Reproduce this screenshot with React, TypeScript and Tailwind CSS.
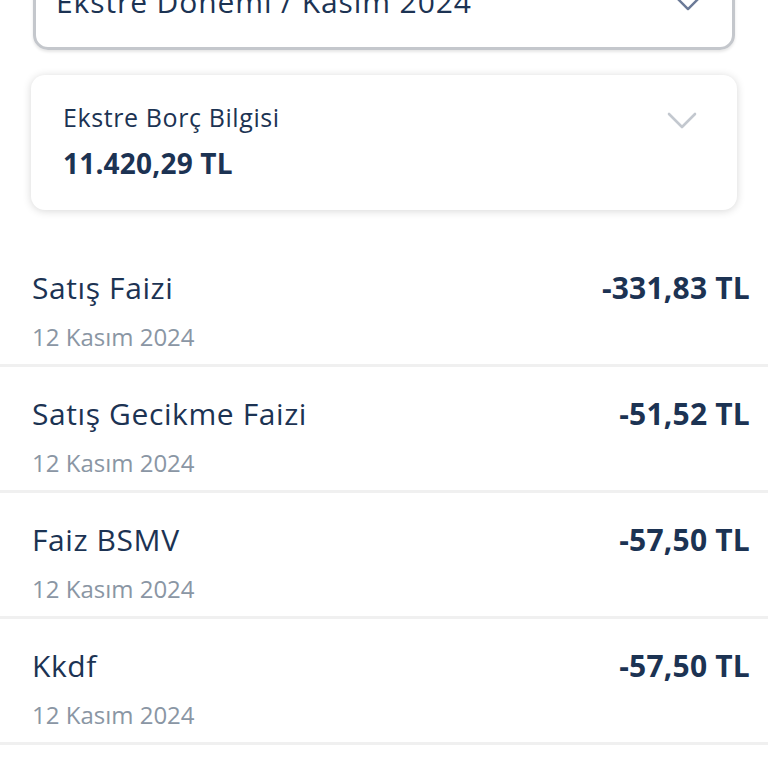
const rows = [
  { title: "Satış Faizi", date: "12 Kasım 2024", amount: "-331,83 TL" },
  { title: "Satış Gecikme Faizi", date: "12 Kasım 2024", amount: "-51,52 TL" },
  { title: "Faiz BSMV", date: "12 Kasım 2024", amount: "-57,50 TL" },
  { title: "Kkdf", date: "12 Kasım 2024", amount: "-57,50 TL" },
];

function Chevron({ className, width = 30 }: { className?: string; width?: number }) {
  return (
    <svg
      className={className}
      width={width}
      height={width / 2 + 2}
      viewBox="0 0 30 17"
      fill="none"
      stroke="currentColor"
      strokeWidth="2.6"
      strokeLinecap="round"
      strokeLinejoin="round"
    >
      <path d="M2 2L15 15L28 2" />
    </svg>
  );
}

export default function App() {
  return (
    <div
      className="w-full h-[768px] overflow-hidden bg-white text-[#1c3353]"
      style={{ fontFamily: "'Open Sans', 'Noto Sans', sans-serif" }}
    >
      {/* Period selector (cut off at top) */}
      <div className="mx-[33px] mt-[-52px] h-[102px] rounded-[15px] border-[3px] border-[#c4c7cc] shadow-[0_2px_3px_rgba(0,0,0,0.1)] flex items-center justify-between pl-[20px] pr-[30px]">
        <span className="text-[30px] leading-none tracking-[0.9px] font-medium mt-[6px]">Ekstre Dönemi / Kasım 2024</span>
        <Chevron className="text-[#6b7a97] mt-[8px]" width={28} />
      </div>

      {/* Statement debt card */}
      <div className="mx-[31px] mt-[25px] h-[135px] rounded-[14px] bg-white shadow-[0_1px_8px_rgba(0,0,0,0.16)] flex items-start justify-between pl-[32px] pr-[40px]">
        <div className="flex flex-col pt-[26px]">
          <span className="text-[25px] leading-[32px] tracking-[0.6px] font-medium">Ekstre Borç Bilgisi</span>
          <span className="text-[28px] leading-[36px] font-bold tracking-[0.2px] mt-[12px]">11.420,29 TL</span>
        </div>
        <Chevron className="text-[#c3c8cf] mt-[37px]" width={30} />
      </div>

      {/* Transactions */}
      <div className="mt-[31px] flex flex-col">
        {rows.map((r) => (
          <div key={r.title} className="border-b-[3px] border-[#f0f0f0] pl-[32px] pr-[18px] pt-[29px] pb-[12px]">
            <div className="flex justify-between items-center h-[36px]">
              <span className="text-[30px] leading-none font-medium tracking-[0.6px]">{r.title}</span>
              <span className="text-[30px] leading-none font-bold tracking-[0.2px]">{r.amount}</span>
            </div>
            <div className="mt-[16px] h-[30px] flex items-center text-[24px] text-[#8a96a4]">{r.date}</div>
          </div>
        ))}
      </div>
    </div>
  );
}
